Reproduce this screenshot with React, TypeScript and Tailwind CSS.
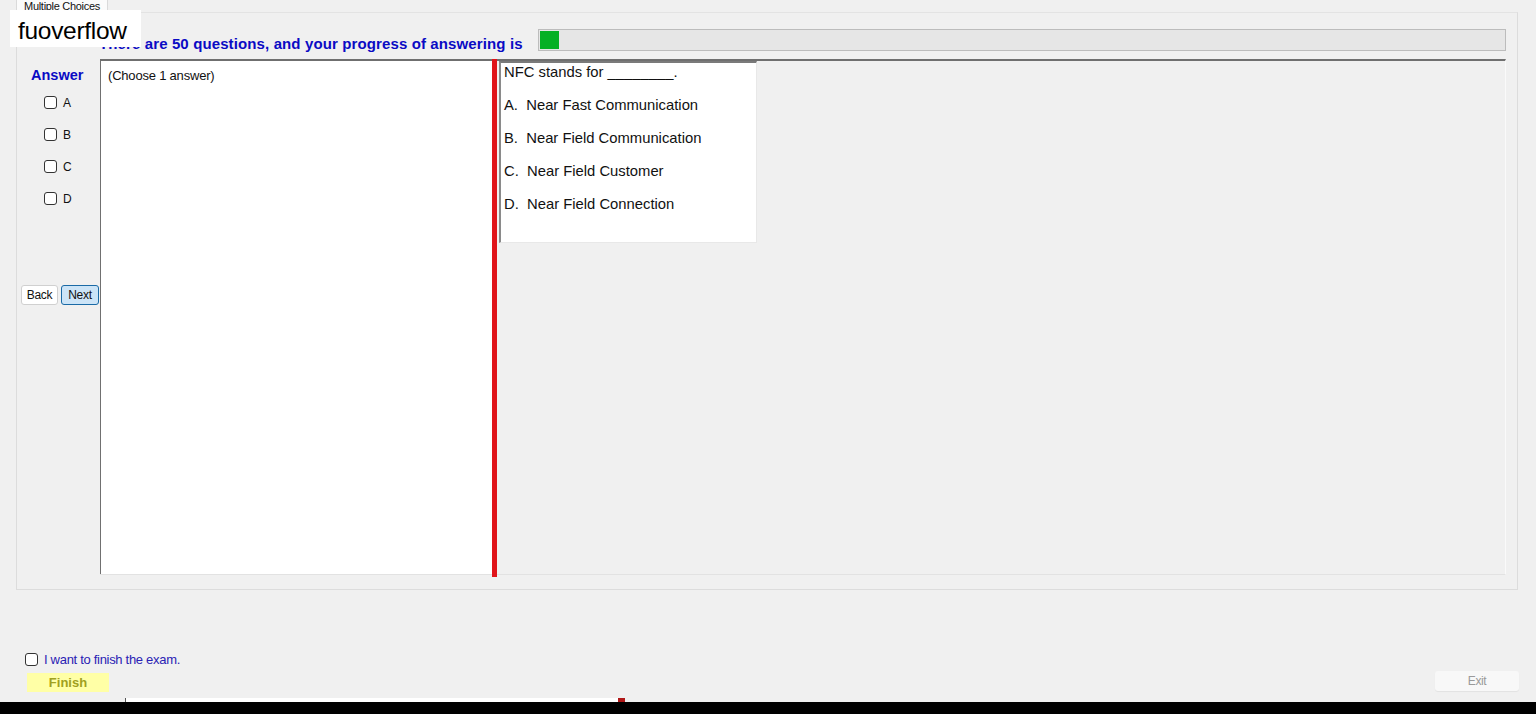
import React from 'react';

// Exam client — "Multiple Choices" tab with answer picker, question viewer and finish bar.

const OPTIONS = ['A', 'B', 'C', 'D'];

const QUESTION = {
  text: 'NFC stands for ________.',
  choices: [
    { key: 'A.', label: 'Near Fast Communication' },
    { key: 'B.', label: 'Near Field Communication' },
    { key: 'C.', label: 'Near Field Customer' },
    { key: 'D.', label: 'Near Field Connection' },
  ],
};

function Check() {
  return <span className="inline-block w-[13px] h-[13px] rounded-[3px] border border-[#333] bg-white shrink-0" />;
}

export default function App() {
  const answered = 1;
  const total = 50;
  const progress = (answered / total) * 100;

  return (
    <div className="relative w-full h-[714px] bg-[#f0f0f0] overflow-hidden flex flex-col font-['Liberation_Sans',Arial,sans-serif] text-black">
      {/* Tab header */}
      <div className="h-[12px] flex pl-[16px]">
        <div className="w-[92px] h-[12px] bg-[#fbfbfb] border-x border-[#dadada] overflow-hidden flex justify-center">
          <span className="text-[11px] leading-[11px] mt-[1px] tracking-[-0.3px] text-[#111]">Multiple Choices</span>
        </div>
      </div>

      {/* Tab page */}
      <div className="ml-[16px] mr-[18px] h-[578px] border border-[#dcdcdc] border-t-[#e3e3e3] flex flex-col shrink-0">
        {/* Header with progress */}
        <div className="mt-[16px] h-[22px] flex items-center pl-[82px] pr-[11px]">
          <span className="self-end -mb-[1px] text-[15px] leading-[17px] tracking-[0.12px] font-bold text-[#0a0ac4] whitespace-nowrap">
            There are {total} questions, and your progress of answering is
          </span>
          <div className="ml-[15px] flex-1 h-[22px] border border-[#bcbcbc] bg-[#e6e6e6] p-[1px]">
            <div className="h-full bg-[#06b025]" style={{ width: `${Math.max(progress, 1.9)}%` }} />
          </div>
        </div>

        {/* Body */}
        <div className="mt-[8px] h-[516px] flex pr-[11px]">
          {/* Answer column */}
          <div className="w-[83px] shrink-0 flex flex-col">
            <div className="pl-[14px] pt-[8px] text-[14.5px] font-bold text-[#0a0ac4] leading-[16px]">Answer</div>
            <div className="pl-[27px] pt-[13px] flex flex-col gap-[19px]">
              {OPTIONS.map((o) => (
                <label key={o} className="flex items-center gap-[6px] h-[13px]">
                  <Check />
                  <span className="text-[12px] text-[#111]">{o}</span>
                </label>
              ))}
            </div>
            <div className="mt-[80px] pl-[4px] flex gap-[3px]">
              <button className="w-[37px] h-[20px] bg-white border border-[#d0d0d0] rounded-[3px] text-[12px] tracking-[-0.3px] text-[#111]">
                Back
              </button>
              <button className="w-[38px] h-[20px] bg-[#cce4f7] border border-[#1a6aa6] rounded-[3px] text-[12px] tracking-[-0.3px] text-[#111]">
                Next
              </button>
            </div>
          </div>

          {/* Question frame */}
          <div className="flex-1 flex border-t-2 border-t-[#6f6f6f] border-r border-r-[#fafafa] border-b border-b-[#e2e2e2]">
            <div className="w-[392px] bg-white border-l border-l-[#707070] pt-[5px] pl-[7px] text-[13px] tracking-[-0.2px] text-[#111]">
              (Choose 1 answer)
            </div>
            <div className="w-[5px] bg-[#e0141a] -mt-[2px] -mb-[3px] shrink-0" />
            <div className="flex-1 pl-[2px]">
              <div className="w-[258px] h-[182px] bg-white border-t-2 border-l-2 border-t-[#7a7a7a] border-l-[#8a8a8a] border-r border-b border-r-[#e8e8e8] border-b-[#e8e8e8] pl-[3px] pt-[1px] text-[14.8px] leading-[17px] text-[#111]">
                <div>{QUESTION.text}</div>
                <div className="mt-[16px] flex flex-col gap-[16px]">
                  {QUESTION.choices.map((c) => (
                    <div key={c.key} className="whitespace-pre">
                      {c.key}  {c.label}
                    </div>
                  ))}
                </div>
              </div>
            </div>
          </div>
        </div>
      </div>

      {/* Finish bar */}
      <div className="flex-1 flex justify-between items-end pb-[6px] pl-[25px] pr-[17px]">
        <div className="flex flex-col">
          <label className="flex items-center gap-[6px]">
            <Check />
            <span className="text-[13px] tracking-[-0.3px] text-[#2a22b4]">I want to finish the exam.</span>
          </label>
          <button className="mt-[4px] ml-[2px] w-[82px] h-[19px] bg-[#ffffa6] text-[13px] font-bold text-[#a0a020] leading-[19px]">
            Finish
          </button>
        </div>
        <button className="w-[84px] h-[20px] mb-[1px] bg-[#f8f8f8] rounded-[3px] shadow-[0_1px_1px_rgba(0,0,0,0.06)] text-[12px] tracking-[-0.4px] text-[#9a9a9a]">
          Exit
        </button>
      </div>

      {/* Taskbar edge */}
      <div className="h-[4px] flex pl-[125px]">
        <div className="w-[500px] h-full bg-white border-l border-[#555] flex justify-end">
          <div className="w-[7px] h-full bg-[#b01818]" />
        </div>
      </div>
      <div className="h-[12px] bg-black shrink-0" />

      {/* Watermark */}
      <div className="absolute left-[10px] top-[10px] w-[131px] h-[37px] bg-white flex items-center pl-[8px] pt-[5px]">
        <span className="text-[24.5px] leading-[24px] text-black tracking-[-0.3px]">fuoverflow</span>
      </div>
    </div>
  );
}
